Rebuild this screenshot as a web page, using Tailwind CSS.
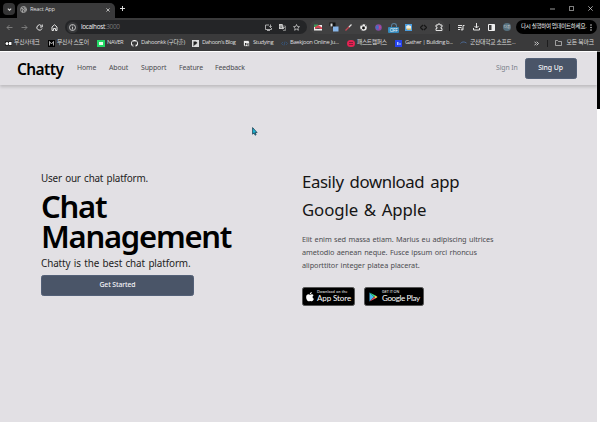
<!DOCTYPE html>
<html lang="ko">
<head>
<meta charset="utf-8">
<title>React App</title>
<script src="https://cdn.jsdelivr.net/npm/@tailwindcss/browser@4"></script>
</head>
<body class="w-[600px] h-[422px] overflow-hidden flex flex-col bg-[#e2e0e4] whitespace-nowrap font-['Noto_Sans','Noto_Sans_CJK_KR',sans-serif]">

<!-- Browser chrome -->
<header class="h-[51px] shrink-0 flex flex-col bg-[#3a3a3b] text-[#dedede] font-['Open_Sans','Noto_Sans_CJK_KR',sans-serif]">
  <div class="h-[18px] shrink-0 bg-black flex">
    <div class="w-[17px] pl-[3px] pt-[3px]"><div class="w-[12px] h-[12px] rounded-[4px] bg-[#343435] flex items-center justify-center">
      <svg class="w-[5px] h-[5px]" viewBox="0 0 6 6" fill="none" stroke="#ddd" stroke-width="1.3"><path d="M1 2l2 2 2-2"/></svg></div></div>
    <div class="w-[98px] mt-[3px] h-[15px] rounded-t-[5px] bg-[#3a3a3b] flex items-center pl-[3px] pr-[5px] pb-[2px]">
      <svg class="w-[7px] h-[7px]" viewBox="0 0 14 14" fill="none" stroke="#b4b4b4" stroke-width="1.6"><circle cx="7" cy="7" r="6"/><path d="M2 4l4 1 1 3-2 1v4M8 1v3l3 1 2 3-4 1-1 3" fill="#777"/></svg>
      <span class="ml-[3px] text-[5.8px] tracking-[-0.25px] leading-none">React App</span>
      <svg class="ml-auto w-[4px] h-[4px]" viewBox="0 0 4 4" stroke="#eee" stroke-width=".7"><path d="M.4.4l3.2 3.2M3.6.4L.4 3.6"/></svg>
    </div>
    <svg class="mt-[6px] ml-[5px] w-[5px] h-[5px]" viewBox="0 0 5 5" stroke="#eee" stroke-width=".9"><path d="M2.5 0v5M0 2.5h5"/></svg>
    <div class="ml-auto flex items-center gap-[14px] pr-[7px] pb-[2px]">
      <svg class="w-[5px] h-[5px]" viewBox="0 0 5 5" stroke="#ddd" stroke-width=".7"><path d="M0 3h5"/></svg>
      <svg class="w-[5px] h-[5px]" viewBox="0 0 5 5" fill="none" stroke="#ccc" stroke-width=".7"><path d="M.4.4h4.2v4.2H.4z"/></svg>
      <svg class="w-[5px] h-[5px]" viewBox="0 0 5 5" stroke="#ddd" stroke-width=".7"><path d="M.3.3l4.4 4.4M4.7.3L.3 4.7"/></svg>
    </div>
  </div>
  <div class="h-[18px] shrink-0 flex items-center">
    <div class="w-[65px] flex items-center pl-[6px] gap-[8px]">
      <svg class="w-[7px] h-[7px]" viewBox="0 0 14 14" fill="none" stroke="#858585" stroke-width="1.7"><path d="M13 7H2M7 2L2 7l5 5"/></svg>
      <svg class="w-[7px] h-[7px]" viewBox="0 0 14 14" fill="none" stroke="#858585" stroke-width="1.7"><path d="M1 7h11M7 2l5 5-5 5"/></svg>
      <svg class="w-[7px] h-[7px]" viewBox="0 0 14 14" fill="none" stroke="#e4e4e4" stroke-width="2"><path d="M12 9A5.3 5.3 0 1 1 11 3.500M12.500 1v5H8"/></svg>
      <svg class="w-[7px] h-[7px]" viewBox="0 0 14 14" fill="none" stroke="#e4e4e4" stroke-width="2"><path d="M2 6l5-4.500L12 6v7H9V9H5v4H2z"/></svg>
    </div>
    <div class="w-[242px] h-[14px] rounded-full bg-[#242527] flex items-center pl-[2px] pr-[7px]">
      <div class="w-[11px] h-[11px] rounded-full bg-[#37383a] flex items-center justify-center"><svg class="w-[7px] h-[7px]" viewBox="0 0 14 14" fill="none" stroke="#ddd" stroke-width="1.6"><circle cx="7" cy="7" r="6"/><path d="M7 6v5M7 3v1.600"/></svg></div>
      <span class="ml-[3px] text-[6.4px] leading-none tracking-[-.32px] text-[#f2f2f2]">localhost<span class="text-[#77787a]">:3000</span></span>
      <div class="ml-auto flex gap-[7px]">
        <svg class="w-[7px] h-[7px]" viewBox="0 0 14 14" fill="none" stroke="#ccc" stroke-width="1.6"><path d="M8 2H1v9h12V8M4 13h6M11 1v6M8.500 4.500L11 7l2.500-2.500"/></svg>
        <svg class="w-[7px] h-[7px]" viewBox="0 0 14 14"><path d="M0 0h7l3 10H0z" fill="#ccc"/><path d="M6 4h7v9H8" fill="none" stroke="#aaa" stroke-width="1.300"/><path d="M7 7h5M9.500 6c0 3-1 4-2 5M8 8l3 3" stroke="#ccc"/><path d="M5.500 4A2 2 0 1 0 6 6H4" fill="none" stroke="#444"/></svg>
        <svg class="w-[7px] h-[7px]" viewBox="0 0 14 14" fill="none" stroke="#ddd" stroke-width="1.400"><path d="M7 1l1.800 4 4.200.4-3.200 2.900 1 4.200L7 10.300l-3.800 2.200 1-4.200L1 5.400 5.200 5z"/></svg>
      </div>
    </div>
    <div class="ml-[3px] w-[135px] h-[14px] rounded-full bg-[#404041] flex items-center pl-[4px]">
      <svg class="w-[8px] h-[7px] mr-[7px]" viewBox="0 0 16 14"><path d="M0 2h16v11H0z" fill="#eee"/><path d="M0 1h8v5H0z" fill="#3c9b58"/><path d="M2 6l7-4 7 5v3H2z" fill="#d44655"/><path d="M5 9h6" stroke="#555" stroke-width="2"/></svg>
      <svg class="w-[10px] h-[10px] mr-[6px]" viewBox="0 0 20 20"><path d="M1 1h12v10H7L1 8z" fill="#111"/><path d="M3 3h4v6H3z" fill="#ddd"/><path d="M8 9h11v10H8z" fill="#87b5e8"/></svg>
      <svg class="w-[7px] h-[7px] mr-[8px]" viewBox="0 0 14 14"><path d="M1 13L9 5" stroke="#c44552" stroke-width="2.500"/><path d="M8 6l5-5" stroke="#ddd" stroke-width="2.500"/></svg>
      <svg class="w-[7px] h-[7px] mr-[8px]" viewBox="0 0 14 14"><circle cx="7" cy="7" r="6.500" fill="#eee"/><path d="M5 5h4l1 4-3 2-3-2zM1 3l4-3v3zM10 1l3 4-3-1zM1 9l3 3H2z" fill="#111"/></svg>
      <svg class="w-[7px] h-[7px] mr-[6px]" viewBox="0 0 14 14"><circle cx="7" cy="7" r="6.500" fill="#884ba5"/><path d="M1 6l4-4 3 5-4 5z" fill="#456fc4"/><path d="M8 3l4 3-3 5z" fill="#d04982"/></svg>
      <div class="shrink-0 w-[11px] h-[10px] mr-[6px] mt-[2px] flex flex-col items-center"><div class="shrink-0 w-[6px] h-[4px] rounded-t-full border border-b-0 border-[#557f9d]"></div><div class="shrink-0 w-[11px] h-[6px] rounded-[1px] bg-[#3689b9] text-white text-[4.6px] leading-[6px] text-center tracking-[-.2px]">OFF</div></div>
      <svg class="w-[7px] h-[7px] mr-[8px]" viewBox="0 0 14 14"><path d="M0 0h14v14H0z" fill="#4b9dde"/><path d="M2 5l4-3 6 2v6H3z" fill="#f1eedf"/><path d="M4 9h8v3H4z" fill="#d3b868"/></svg>
      <svg class="w-[7px] h-[7px] mr-[8px]" viewBox="0 0 14 14" fill="none" stroke="#171717" stroke-width="2.500"><path d="M6 2L1 7l5 5M8 2l5 5-5 5"/></svg>
      <svg class="w-[8px] h-[8px]" viewBox="0 0 16 16" fill="none" stroke="#e0e0e0" stroke-width="2"><path d="M2 4h4V2h4v2h4v4h-2v3h2v4H2v-4h2V8H2z"/></svg>
    </div>
    <div class="ml-[4px] w-px h-[7px] bg-[#1d1d1e]"></div>
    <div class="ml-[8px] flex gap-[8px] items-center">
      <svg class="w-[7px] h-[7px]" viewBox="0 0 14 14" fill="none" stroke="#e4e4e4" stroke-width="2"><path d="M0 3h8M0 7h7M0 11h4M13 3h-3v8"/><circle cx="8" cy="11" r="1.500"/></svg>
      <svg class="w-[7px] h-[8px]" viewBox="0 0 14 16" fill="none" stroke="#e4e4e4" stroke-width="2"><path d="M7 0v10M3 6l4 4 4-4M1 10v4h12v-4"/></svg>
      <svg class="w-[7px] h-[7px]" viewBox="0 0 14 14"><path d="M1 1h12v12H1z" fill="none" stroke="#eee" stroke-width="2"/><path d="M7 1h6v12H7z" fill="#eee"/></svg>
      <div class="w-[8px] h-[8px] rounded-full bg-[#56717f] text-[3.5px] text-center leading-[8px]">다훈</div>
    </div>
    <div class="ml-auto mr-[3px] w-[81px] h-[14px] rounded-full bg-black flex items-center pl-[5px] pr-[5px]">
      <span class="text-[5.5px] leading-none tracking-[-0.3px] text-white">다시 실행하여 업데이트하세요.</span>
      <svg class="ml-auto shrink-0 w-[2px] h-[7px]" viewBox="0 0 2 7" fill="#eee"><circle cx="1" cy="1" r=".7"/><circle cx="1" cy="3.500" r=".7"/><circle cx="1" cy="6" r=".7"/></svg>
    </div>
  </div>
  <nav class="h-[14px] flex items-center pl-[5px] text-[5.8px] leading-none">
    <div class="w-[43px] flex items-center gap-[2px]"><svg class="w-[7px] h-[7px]" viewBox="0 0 14 14"><path d="M0 3h14v8H0z" fill="#111"/><circle cx="4" cy="7" r="3" fill="#fff"/><path d="M8 4h5v6H8z" fill="#fff"/></svg><span class="tracking-[-.2px]">무신사테크</span></div>
    <div class="w-[49px] flex items-center gap-[2px]"><div class="w-[7px] h-[7px] bg-black"><svg viewBox="0 0 14 14" fill="none" stroke="#ddd" stroke-width="1.500"><path d="M3 11V3l4 5 4-5v8"/></svg></div><span class="tracking-[-.25px]">무신사 스토어</span></div>
    <div class="w-[34px] flex items-center gap-[2px]"><div class="w-[8px] h-[7px] bg-[#22d765] flex items-center justify-center"><div class="w-[4px] h-[3px] bg-[#e7ffed]"></div></div><span class="tracking-[-.4px]">NAVER</span></div>
    <div class="w-[61px] flex items-center gap-[3px]"><svg class="w-[7px] h-[7px]" viewBox="0 0 16 16" fill="#fff"><path d="M8 0a8 8 0 0 0-2.500 15.600V13c-2 .5-2.600-1-3-1.600 1.500-.2 1.500 1.200 3 .7l.5-1C3.500 10.700 2 9.500 2 7.200c0-1 .4-1.800 1-2.400V2.700l2.200.9a9 9 0 0 1 5.600 0l2.200-.9v2.100c.6.6 1 1.400 1 2.400 0 2.300-1.500 3.500-4 3.900.4.400.5 1 .5 1.700v2.800A8 8 0 0 0 8 0"/></svg><span class="tracking-[-.33px]">Dahoonkk (구다훈)</span></div>
    <div class="w-[51px] flex items-center gap-[3px]"><svg class="w-[7px] h-[7px]" viewBox="0 0 14 14"><path d="M0 0h14v14H0z" fill="#ddd"/><path d="M3 3h5l3 3-2 1-1 2H6l-3 4z" fill="#222"/></svg><span class="tracking-[-.42px]">Dahoon's Blog</span></div>
    <div class="w-[38px] flex items-center gap-[3px]"><svg class="w-[7px] h-[7px]" viewBox="0 0 14 14" fill="#eee" stroke="#111"><path d="M1 1h10l2 3v9H3l-2-3z"/><path d="M5 11V6l5 5V6" fill="none" stroke-width="1.600"/></svg><span class="tracking-[-.4px]">Studying</span></div>
    <div class="w-[66px] flex items-center gap-[2px]"><svg class="shrink-0 w-[7px] h-[7px]" viewBox="0 0 14 14" fill="none" stroke="#345d8c" stroke-width="1.300"><path d="M4 4L1 7l3 3M8 3L6 11M10 4l3 3-3 3"/></svg><span class="tracking-[-.34px]">Baekjoon Online Ju...</span></div>
    <div class="w-[48px] flex items-center gap-[2px]"><div class="shrink-0 w-[8px] h-[7px] rounded-full bg-[#e32252] flex flex-col items-center justify-center gap-px"><div class="w-[4px] h-px bg-[#861b39]"></div><div class="w-[4px] h-px bg-[#861b39]"></div></div><span class="tracking-[-.4px]">패스트캠퍼스</span></div>
    <div class="w-[65px] flex items-center gap-[3px]"><svg class="shrink-0 w-[7px] h-[7px]" viewBox="0 0 14 14"><path d="M0 0h14v14H0z" fill="#2542ef"/><path d="M4 4h3v6H4M9 6h2v4H9" fill="#aec3ff"/></svg><span class="tracking-[-.4px]">Gather | Building b...</span></div>
    <div class="flex items-center gap-[3px]"><svg class="w-[7px] h-[7px]" viewBox="0 0 14 14" fill="none" stroke="#5277b0" stroke-width="1.500"><path d="M1 7c3-4 7-4 12-1"/></svg><span class="tracking-[-.28px]">군산대학교 소프트...</span></div>
    <div class="ml-auto flex items-center pr-[6px]">
      <svg class="w-[5px] h-[5px]" viewBox="0 0 5 5" fill="none" stroke="#eee" stroke-width=".8"><path d="M.5.700l1.800 1.800L.5 4.300M2.700.700l1.800 1.800-1.800 1.800"/></svg>
      <div class="ml-[8px] mr-[7px] w-px h-[7px] bg-[#1d1d1e]"></div>
      <svg class="w-[7px] h-[6px] mr-[4px]" viewBox="0 0 14 12" fill="none" stroke="#ccc" stroke-width="1.400"><path d="M1 1h4l2 2h6v8H1z"/></svg>
      <span class="tracking-[-.1px]">모든 북마크</span>
    </div>
  </nav>
</header>

<!-- Page viewport -->
<div class="flex-1 min-h-0 flex">
  <div class="w-[597px] flex flex-col relative">
    <nav class="h-[34px] shrink-0 border-t border-white flex items-center pl-[17px] pr-[20.5px] shadow-[0_2px_3px_#0000002b] text-[6.9px] text-[#4a4a4e]">
      <span class="w-[60px] pt-[2px] text-[15.5px] leading-none font-semibold text-black tracking-[-.6px]">Chatty</span>
      <span class="w-[32px] tracking-[-.1px]">Home</span><span class="w-[32px] tracking-[-.1px]">About</span><span class="w-[38px] tracking-[-.1px]">Support</span><span class="w-[36px] tracking-[-.1px]">Feature</span><span class="tracking-[-.1px]">Feedback</span>
      <span class="ml-auto mr-[7px] text-[#7b828b] tracking-[-.15px]">Sign In</span>
      <button class="w-[52px] h-[21px] rounded-[2.5px] bg-[#4a5568] border border-[#536077] text-[#f4f4f7] font-medium tracking-[-.1px]">Sing Up</button>
    </nav>
    <main class="flex-1 flex">
      <section class="w-[302px] pl-[41px] pt-[85px] flex flex-col items-start text-[#222]">
        <p class="h-[18px] leading-[17px] text-[9.9px] tracking-[-.2px] [word-spacing:1px]">User our chat platform.</p>
        <h1 class="mt-[3px] text-[31px] leading-[30px] font-semibold text-black tracking-[-1.25px]"><span class="block">Chat</span><span class="block">Management</span></h1>
        <p class="leading-[16px] text-[9.9px] tracking-[-.1px] [word-spacing:.9px] mt-[4px]">Chatty is the best chat platform.</p>
        <button class="mt-[4px] w-[153px] h-[21px] rounded-[2.5px] bg-[#4a5568] border border-[#536077] text-[6.8px] text-[#f4f4f7] font-medium tracking-[-.1px]">Get Started</button>
      </section>
      <section class="pt-[83px] flex flex-col items-start">
        <h2 class="text-[16.8px] leading-[28px] text-[#151515]"><span class="block tracking-[-.4px] [word-spacing:2px]">Easily download app</span><span class="block tracking-[-.1px] [word-spacing:1.5px]">Google &amp; Apple</span></h2>
        <p class="mt-[9px] text-[7.3px] leading-[13px] text-[#4c4c50] tracking-[-.07px] [word-spacing:.6px]">Elit enim sed massa etiam. Marius eu adipiscing ultrices<br>ametodio aenean neque. Fusce ipsum orci rhoncus<br>aliporttitor integer platea placerat.</p>
        <div class="mt-[15px] flex gap-[9px] text-white font-['Lato',sans-serif]">
          <div class="w-[53px] h-[19px] rounded-[2.5px] bg-black border border-[#555] flex items-center pl-[3px] gap-[3px]">
            <svg class="w-[8px] h-[10px]" viewBox="0 0 16 20" fill="#fff"><path d="M11.500 0c.2 2-1.600 4.300-3.800 4.200C7.500 2.200 9.500.200 11.500 0M8 5.500c1 0 2-1 4-.9 1.200.1 2.400.6 3.200 1.800-3 1.900-2.500 5.900.6 7.100-.8 2.300-2.500 5-4.200 5-1.200 0-1.700-.7-3.200-.7s-2 .7-3.200.7C3 18.500.3 14 .3 10.300.3 6.800 2.500 4.700 4.700 4.700c1.400 0 2.500.8 3.300.8"/></svg>
            <div class="flex flex-col"><span class="text-[3.6px] leading-[4px] tracking-[.22px]">Download on the</span><span class="text-[8px] leading-[9px] tracking-[-.1px]">App Store</span></div>
          </div>
          <div class="w-[60px] h-[19px] rounded-[2.5px] bg-black border border-[#555] flex items-center pl-[4px] gap-[4px]">
            <svg class="w-[9px] h-[10px]" viewBox="0 0 18 20"><path d="M1 1l9 9-9 9z" fill="#45b9ee"/><path d="M1 1l12 6-3 3z" fill="#31dc86"/><path d="M13 7l4 3-4 3-3-3z" fill="#f2cf55"/><path d="M1 19l9-9 3 3z" fill="#ed4657"/></svg>
            <div class="flex flex-col"><span class="text-[3.6px] leading-[4px]">GET IT ON</span><span class="text-[8px] leading-[9px] tracking-[-.38px]">Google Play</span></div>
          </div>
        </div>
      </section>
    </main>
    <svg class="absolute left-[252px] top-[76px] w-[6px] h-[9px]" viewBox="0 0 6 9"><path d="M.6.600v6.600l1.500-1.300 1 2.300 1-.5-1-2.100h2z" fill="#20b7d6" stroke="#153e50" stroke-width=".8"/></svg>
  </div>
  <div class="w-[3px] bg-white border-t border-[#888]"><div class="h-[57px] bg-black"></div></div>
</div>
</body>
</html>
